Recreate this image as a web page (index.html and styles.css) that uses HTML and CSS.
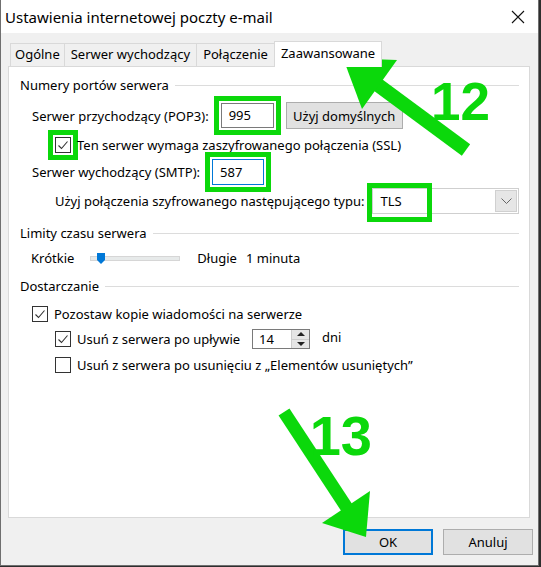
FILE: index.html
```html
<!DOCTYPE html>
<html lang="pl">
<head>
  <meta charset="UTF-8" />
  <title>Ustawienia internetowej poczty e-mail</title>
  <link rel="stylesheet" href="styles.css">
</head>
<body>
  <div class="window">
    <div class="titlebar">
      <span class="title">Ustawienia internetowej poczty e-mail</span>
      <svg class="close" width="14" height="14" viewBox="0 0 14 14">
        <path d="M1 1 L13 13 M13 1 L1 13" stroke="#111" stroke-width="1.1" fill="none"/>
      </svg>
    </div>

    <div class="content">
      <div class="tabs">
        <div class="tab tab-first">Ogólne</div>
        <div class="tab">Serwer wychodzący</div>
        <div class="tab">Połączenie</div>
        <div class="tab active">Zaawansowane</div>
      </div>

      <div class="panel">
        <div class="group">Numery portów serwera</div>

        <div class="row row-pop">
          <span>Serwer przychodzący (POP3):</span>
          <div class="field field-pop marked">995</div>
          <button class="btn btn-default">Użyj domyślnych</button>
        </div>

        <div class="row row-ssl">
          <span class="cb marked">
            <svg width="14" height="14" viewBox="0 0 14 14"><path d="M2.5 7.5 L5.5 10.5 L11.5 3.5" stroke="#333" stroke-width="1.1" fill="none"/></svg>
          </span>
          <span class="cb-label">Ten serwer wymaga zaszyfrowanego połączenia (SSL)</span>
        </div>

        <div class="row row-smtp">
          <span>Serwer wychodzący (SMTP):</span>
          <div class="field field-smtp marked">587</div>
        </div>

        <div class="row row-enc">
          <span>Użyj połączenia szyfrowanego następującego typu:</span>
          <div class="select">
            <span class="select-val">TLS</span>
            <span class="select-btn">
              <svg width="11" height="7" viewBox="0 0 11 7"><path d="M0.5 0.5 L5.5 5.5 L10.5 0.5" stroke="#666" stroke-width="1" fill="none"/></svg>
            </span>
            <span class="tls-mark"></span>
          </div>
        </div>

        <div class="group group-time">Limity czasu serwera</div>

        <div class="row row-slider">
          <span>Krótkie</span>
          <div class="slider">
            <svg class="thumb" width="8" height="11" viewBox="0 0 8 11"><path d="M0 0 H8 V7 L4 11 L0 7 Z" fill="#0078d7"/></svg>
          </div>
          <span>Długie</span>
          <span class="minutes">1 minuta</span>
        </div>

        <div class="group group-deliv">Dostarczanie</div>

        <div class="row row-keep">
          <span class="cb">
            <svg width="14" height="14" viewBox="0 0 14 14"><path d="M2.5 7.5 L5.5 10.5 L11.5 3.5" stroke="#333" stroke-width="1.1" fill="none"/></svg>
          </span>
          <span class="cb-label">Pozostaw kopie wiadomości na serwerze</span>
        </div>

        <div class="row row-after">
          <span class="cb">
            <svg width="14" height="14" viewBox="0 0 14 14"><path d="M2.5 7.5 L5.5 10.5 L11.5 3.5" stroke="#333" stroke-width="1.1" fill="none"/></svg>
          </span>
          <span class="cb-label">Usuń z serwera po upływie</span>
          <div class="spin">
            <span class="spin-val">14</span>
            <span class="spin-btns">
              <span class="spin-up"></span>
              <span class="spin-down"></span>
            </span>
          </div>
          <span class="days">dni</span>
        </div>

        <div class="row row-deleted">
          <span class="cb"></span>
          <span class="cb-label">Usuń z serwera po usunięciu z „Elementów usuniętych”</span>
        </div>
      </div>

      <div class="footer">
        <button class="btn btn-primary">OK</button>
        <button class="btn">Anuluj</button>
      </div>
    </div>

    <!-- green annotations drawn over the dialog -->
    <svg class="annot" width="541" height="567" viewBox="0 0 541 567">
      <line x1="466" y1="150" x2="378" y2="85" stroke="#0bd80b" stroke-width="14"/>
      <polygon points="343,58 397,60 362,109" fill="#0bd80b"/>
      <text x="490" y="120" text-anchor="end" class="num num-12">12</text>

      <line x1="284" y1="412" x2="347" y2="508" stroke="#0bd80b" stroke-width="13"/>
      <polygon points="366,537 370,491 322,523" fill="#0bd80b"/>
      <text x="372" y="455" text-anchor="end" class="num num-13">13</text>
    </svg>
  </div>
</body>
</html>
```

FILE: styles.css
```css
* {
  box-sizing: border-box;
}

body {
  margin: 0;
  background-color: #2e2e2e;
  color: #000;
  font-family: "Noto Sans", sans-serif;
  font-size: 13px;
  white-space: nowrap;
}

.window {
  position: relative;
  width: 539px;
  height: 566px;
  background-color: #f0f0f0;
  border: 1px solid #6f6f6f;
  border-top: none;
  display: flex;
  flex-direction: column;
}

.titlebar {
  height: 33px;
  background-color: #fff;
  display: flex;
  align-items: center;
  justify-content: space-between;
  padding: 0 13px 0 4px;
  font-size: 15px;
}

.content {
  flex: 1;
  display: flex;
  flex-direction: column;
  padding: 8px 8px 0 7px;
}

.tabs {
  display: flex;
  align-items: flex-end;
  height: 25px;
  margin-left: 2px;
  position: relative;
  z-index: 1;
}

.tab {
  height: 23px;
  line-height: 21px;
  padding: 0 6px;
  border: 1px solid #d9d9d9;
  border-bottom: none;
  margin-right: -1px;
  background-color: #f0f0f0;
}

.tab-first {
  padding: 0 4px;
}

.tab.active {
  height: 26px;
  line-height: 23px;
  margin-bottom: -1px;
  background-color: #fff;
}

.panel {
  height: 452px;
  background-color: #fff;
  border: 1px solid #d9d9d9;
  padding: 9px 10px 0 11px;
  display: flex;
  flex-direction: column;
}

.group {
  display: flex;
  align-items: center;
  height: 18px;
}

.group::after {
  content: "";
  flex: 1;
  height: 1px;
  margin-left: 6px;
  background-color: #dcdcdc;
}

.row {
  display: flex;
  align-items: center;
}

.row-pop {
  margin-top: 8px;
  padding-left: 12px;
}

.row-ssl {
  margin-top: 7px;
  padding-left: 35px;
}

.row-smtp {
  margin-top: 5px;
  padding-left: 12px;
}

.row-enc {
  margin-top: 3px;
  padding-left: 35px;
}

.group-time {
  margin-top: 10px;
}

.row-slider {
  margin-top: 7px;
  padding-left: 11px;
  height: 18px;
}

.group-deliv {
  margin-top: 10px;
}

.row-keep {
  margin-top: 10px;
  padding-left: 12px;
}

.row-after {
  margin-top: 6px;
  padding-left: 35px;
}

.row-deleted {
  margin-top: 7px;
  padding-left: 35px;
}

.field {
  height: 25px;
  line-height: 23px;
  border: 1px solid #7a7a7a;
  background-color: #fff;
  padding-left: 7px;
}

.field-pop {
  width: 53px;
  margin-left: 12px;
}

.field-smtp {
  width: 52px;
  height: 26px;
  line-height: 24px;
  margin-left: 12px;
  border-color: #0078d7;
}

.marked {
  outline: 5px solid #0bd80b;
  outline-offset: 2px;
}

.btn {
  width: 90px;
  height: 26px;
  padding: 0;
  font: inherit;
  color: #000;
  background-color: #e1e1e1;
  border: 1px solid #adadad;
}

.btn-default {
  width: 117px;
  height: 27px;
  margin-left: 12px;
}

.btn-primary {
  border: 2px solid #0078d7;
}

.cb {
  width: 16px;
  height: 16px;
  border: 1px solid #333;
  background-color: #fff;
  display: flex;
  align-items: center;
  justify-content: center;
  flex-shrink: 0;
}

.cb-label {
  margin-left: 6px;
}

.select {
  position: relative;
  width: 152px;
  height: 26px;
  margin-left: 8px;
  border: 1px solid #cfcfcf;
  background-color: #fff;
  display: flex;
  align-items: center;
  padding: 1px;
}

.select-val {
  flex: 1;
  padding-left: 6px;
}

.select-btn {
  width: 22px;
  height: 22px;
  border: 1px solid #d0d0d0;
  background-color: #e6e6e6;
  display: flex;
  align-items: center;
  justify-content: center;
}

.tls-mark {
  position: absolute;
  left: -6px;
  top: -6px;
  width: 65px;
  height: 39px;
  border: 5px solid #0bd80b;
}

.slider {
  position: relative;
  width: 90px;
  height: 5px;
  margin: 0 17px 0 16px;
  background-color: #e7eaea;
  border: 1px solid #d6d6d6;
}

.thumb {
  position: absolute;
  left: 6px;
  top: -4px;
}

.minutes {
  margin-left: 9px;
}

.spin {
  display: flex;
  width: 58px;
  height: 20px;
  margin-left: 12px;
  border: 1px solid #7a7a7a;
  background-color: #fff;
}

.spin-val {
  flex: 1;
  padding-left: 6px;
  line-height: 18px;
}

.spin-btns {
  width: 18px;
  display: flex;
  flex-direction: column;
  background-color: #e5e5e5;
  border-left: 1px solid #cccccc;
}

.spin-up,
.spin-down {
  flex: 1;
  display: flex;
  align-items: center;
  justify-content: center;
}

.spin-up::before {
  content: "";
  border: 4px solid transparent;
  border-bottom: 4px solid #222;
  border-top: none;
}

.spin-down {
  border-top: 1px solid #cccccc;
}

.spin-down::before {
  content: "";
  border: 4px solid transparent;
  border-top: 4px solid #222;
  border-bottom: none;
}

.days {
  margin-left: 12px;
  margin-top: -4px;
}

.footer {
  display: flex;
  justify-content: flex-end;
  gap: 10px;
  padding-top: 11px;
  margin-right: -3px;
}

.annot {
  position: absolute;
  left: -1px;
  top: 0;
  pointer-events: none;
}

.num {
  font-family: "Liberation Sans", Arial, sans-serif;
  font-weight: bold;
  fill: #0bd80b;
}

.num-12 {
  font-size: 53px;
}

.num-13 {
  font-size: 56px;
}
```
